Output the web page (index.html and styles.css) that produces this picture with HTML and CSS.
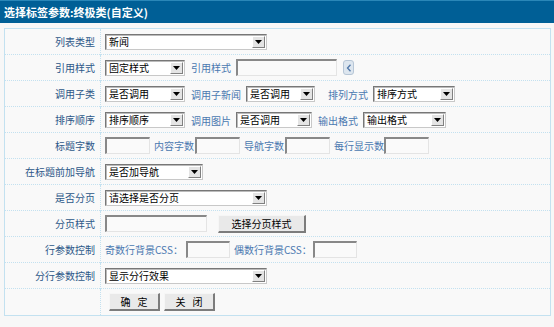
FILE: index.html
```html
<!DOCTYPE html>
<html>
<head>
<meta charset="utf-8">
<link rel="stylesheet" href="styles.css">
</head>
<body>
<div class="title">选择标签参数:终极类(自定义)</div>
<table class="form">
  <tr>
    <th>列表类型</th>
    <td><span class="sel w162"><span class="val">新闻</span><span class="btn"><svg width="7" height="4" viewBox="0 0 7 4"><path d="M0 0h7L3.5 4z" fill="#000"/></svg></span></span></td>
  </tr>
  <tr>
    <th>引用样式</th>
    <td>
      <span class="sel w80"><span class="val">固定样式</span><span class="btn"><svg width="7" height="4" viewBox="0 0 7 4"><path d="M0 0h7L3.5 4z" fill="#000"/></svg></span></span><span class="lbl l6">引用样式</span><span class="inp w101"></span><span class="pick"><svg width="6" height="8" viewBox="0 0 6 8"><path d="M4.5 0.8L1.5 4l3 3.2" fill="none" stroke="#4f76a8" stroke-width="1.3"/></svg></span>
    </td>
  </tr>
  <tr>
    <th>调用子类</th>
    <td>
      <span class="sel w80"><span class="val">是否调用</span><span class="btn"><svg width="7" height="4" viewBox="0 0 7 4"><path d="M0 0h7L3.5 4z" fill="#000"/></svg></span></span><span class="lbl l6">调用子新闻</span><span class="sel w69"><span class="val">是否调用</span><span class="btn"><svg width="7" height="4" viewBox="0 0 7 4"><path d="M0 0h7L3.5 4z" fill="#000"/></svg></span></span><span class="lbl l13">排列方式</span><span class="sel w82"><span class="val">排序方式</span><span class="btn"><svg width="7" height="4" viewBox="0 0 7 4"><path d="M0 0h7L3.5 4z" fill="#000"/></svg></span></span>
    </td>
  </tr>
  <tr>
    <th>排序顺序</th>
    <td>
      <span class="sel w80"><span class="val">排序顺序</span><span class="btn"><svg width="7" height="4" viewBox="0 0 7 4"><path d="M0 0h7L3.5 4z" fill="#000"/></svg></span></span><span class="lbl l6">调用图片</span><span class="sel w76"><span class="val">是否调用</span><span class="btn"><svg width="7" height="4" viewBox="0 0 7 4"><path d="M0 0h7L3.5 4z" fill="#000"/></svg></span></span><span class="lbl l6">输出格式</span><span class="sel w83"><span class="val">输出格式</span><span class="btn"><svg width="7" height="4" viewBox="0 0 7 4"><path d="M0 0h7L3.5 4z" fill="#000"/></svg></span></span>
    </td>
  </tr>
  <tr>
    <th>标题字数</th>
    <td>
      <span class="inp w45"></span><span class="lbl l4 r1">内容字数</span><span class="inp w45"></span><span class="lbl l4 r1">导航字数</span><span class="inp w45"></span><span class="lbl l4 r0">每行显示数</span><span class="inp w45"></span>
    </td>
  </tr>
  <tr>
    <th>在标题前加导航</th>
    <td><span class="sel w98"><span class="val">是否加导航</span><span class="btn"><svg width="7" height="4" viewBox="0 0 7 4"><path d="M0 0h7L3.5 4z" fill="#000"/></svg></span></span></td>
  </tr>
  <tr>
    <th>是否分页</th>
    <td><span class="sel w162"><span class="val">请选择是否分页</span><span class="btn"><svg width="7" height="4" viewBox="0 0 7 4"><path d="M0 0h7L3.5 4z" fill="#000"/></svg></span></span></td>
  </tr>
  <tr>
    <th>分页样式</th>
    <td><span class="inp w102"></span><span class="button pbtn">选择分页样式</span></td>
  </tr>
  <tr>
    <th>行参数控制</th>
    <td><span class="lbl l0 r3">奇数行背景CSS：</span><span class="inp w44"></span><span class="lbl l4 r1">偶数行背景CSS：</span><span class="inp w44"></span></td>
  </tr>
  <tr>
    <th>分行参数控制</th>
    <td><span class="sel w162"><span class="val">显示分行效果</span><span class="btn"><svg width="7" height="4" viewBox="0 0 7 4"><path d="M0 0h7L3.5 4z" fill="#000"/></svg></span></span></td>
  </tr>
  <tr class="last">
    <th></th>
    <td><span class="button act first">确 定</span><span class="button act">关 闭</span></td>
  </tr>
</table>
</body>
</html>
```
FILE: styles.css
```css
html, body {
  margin: 0;
  padding: 0;
  background: #f7f7f7;
  font-family: "Noto Sans CJK SC", "Liberation Sans", sans-serif;
  font-size: 10px;
  color: #000;
}
.title {
  height: 23px;
  line-height: 22px;
  padding-left: 4px;
  color: #fff;
  font-weight: bold;
  font-size: 11px;
  background-color: #00649b;
  background-image: radial-gradient(circle, rgba(0,40,90,0.25) 0.5px, transparent 0.8px);
  background-size: 2px 2px;
  border-top: 1px solid #2a87b8;
  box-sizing: border-box;
}
.form {
  margin: 5px 0 0 4px;
  width: 547px;
  border-collapse: collapse;
  border: 1px solid #c3e1f0;
  background: #f9f9f9;
}
.form tr { height: 26px; }
.form tr + tr th, .form tr + tr td { border-top: 1px dotted #c3e1f0; }
.form th {
  width: 90px;
  padding: 0 5px 0 0;
  text-align: right;
  font-weight: normal;
  color: #2c5788;
  border-right: 1px dotted #c3e1f0;
  white-space: nowrap;
}
.form td {
  padding: 0 0 0 4px;
  white-space: nowrap;
}
.form td > * { vertical-align: middle; }
.sel {
  display: inline-flex;
  align-items: center;
  box-sizing: border-box;
  height: 16px;
  background: #fff;
  border: 1px solid #777;
  border-right-color: #c8c8c8;
  border-bottom-color: #c8c8c8;
  box-shadow: inset 1px 1px 0 #bbb;
}
.sel .val {
  flex: 1;
  padding-left: 3px;
  line-height: 12px;
}
.sel .btn {
  width: 13px;
  height: 12px;
  margin-right: 1px;
  display: flex;
  align-items: center;
  justify-content: center;
  background: #e4e4e4;
  border-top: 1px solid #fff;
  border-left: 1px solid #fff;
  border-right: 1px solid #808080;
  border-bottom: 1px solid #808080;
  box-sizing: border-box;
}
.w162 { width: 162px; }
.w80 { width: 80px; }
.w69 { width: 69px; }
.w76 { width: 76px; }
.w82 { width: 82px; }
.w83 { width: 83px; }
.w98 { width: 98px; }
.w101 { width: 101px; }
.w102 { width: 102px; }
.w45 { width: 45px; }
.w44 { width: 44px; }
.inp {
  display: inline-block;
  box-sizing: border-box;
  height: 17px;
  background: #fafafa;
  border: 1px solid #e4e4e4;
  border-top: 2px solid #888;
  border-left: 2px solid #888;
}
.lbl {
  color: #4a78b0;
  margin: 0 5px 0 6px;
}
.l0 { margin-left: 0; }
.l4 { margin-left: 4px; }
.l6 { margin-left: 6px; }
.l13 { margin-left: 13px; }
.r0 { margin-right: 0; }
.r1 { margin-right: 1px; }
.r3 { margin-right: 3px; }
.pick {
  display: inline-flex;
  align-items: center;
  justify-content: center;
  box-sizing: border-box;
  width: 11px;
  height: 15px;
  margin-left: 6px;
  background: #dde6ef;
  border: 1px solid #b7c6d6;
  border-radius: 3px;
}
.button {
  display: inline-block;
  box-sizing: border-box;
  height: 18px;
  line-height: 15px;
  text-align: center;
  background: #e9e9e9;
  border: 1px solid #f6f6f6;
  border-right: 2px solid #7c7c7c;
  border-bottom: 2px solid #7c7c7c;
  color: #000;
}
.pbtn {
  width: 88px;
  margin-left: 11px;
}
.act {
  width: 51px;
  margin-left: 4px;
  word-spacing: 5px;
}
.act.first { margin-left: 4px; }
.form tr.last { height: 27px; }
```
